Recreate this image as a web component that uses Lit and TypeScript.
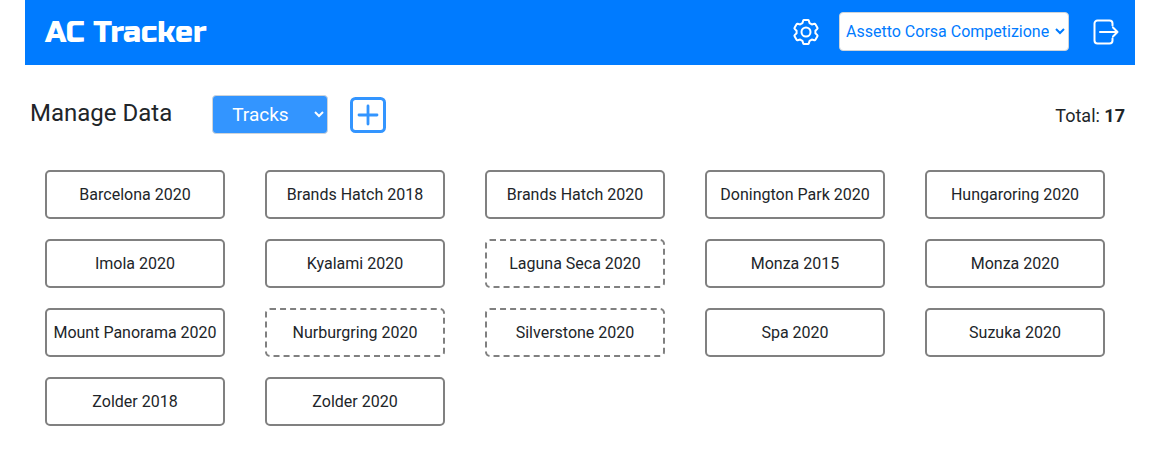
import { LitElement, html, css } from "lit";
import { customElement, property } from "lit/decorators.js";
import { classMap } from "lit/directives/class-map.js";

interface Track {
  name: string;
  year: number;
  pending?: boolean;
}

const TRACKS: Track[] = [
  { name: "Barcelona", year: 2020 },
  { name: "Brands Hatch", year: 2018 },
  { name: "Brands Hatch", year: 2020 },
  { name: "Donington Park", year: 2020 },
  { name: "Hungaroring", year: 2020 },
  { name: "Imola", year: 2020 },
  { name: "Kyalami", year: 2020 },
  { name: "Laguna Seca", year: 2020, pending: true },
  { name: "Monza", year: 2015 },
  { name: "Monza", year: 2020 },
  { name: "Mount Panorama", year: 2020 },
  { name: "Nurburgring", year: 2020, pending: true },
  { name: "Silverstone", year: 2020, pending: true },
  { name: "Spa", year: 2020 },
  { name: "Suzuka", year: 2020 },
  { name: "Zolder", year: 2018 },
  { name: "Zolder", year: 2020 },
];

@customElement("app-header")
export class AppHeader extends LitElement {
  static styles = css`
    :host {
      display: block;
      background: #007bff;
      color: #fff;
    }
    .bar {
      display: flex;
      align-items: center;
      justify-content: space-between;
      min-height: 65px;
      padding: 0 15px 2px 20px;
      box-sizing: border-box;
    }
    .brand {
      color: inherit;
      text-decoration: none;
      font-family: "Russo One", Roboto, sans-serif;
      font-size: 30px;
      line-height: 36px;
      font-weight: 400;
    }
    .actions {
      display: flex;
      align-items: center;
      gap: 19px;
    }
    .icon {
      display: block;
      padding: 0;
      border: 0;
      background: none;
      color: inherit;
      cursor: pointer;
    }
    .icon svg {
      display: block;
    }
    .logout {
      margin-left: 4px;
    }
    .game {
      width: 230px;
      height: 39px;
      padding: 0 2px;
      border: 1px solid #ced4da;
      border-radius: 4px;
      background-color: #fff;
      color: #007bff;
      font: 16px Roboto, sans-serif;
    }
  `;

  render() {
    return html`
      <header class="bar">
        <a class="brand" href="#">AC Tracker</a>
        <div class="actions">
          <button class="icon" aria-label="Settings">
            <svg width="28" height="28" viewBox="0 0 28 28" fill="none" stroke="currentColor" stroke-width="2" stroke-linejoin="round">
              <path d="M10.4 5.2L11.200 2.600Q11.400 2 12 2h4q.6 0 .8.6l.8 2.600 2.220 1.280 2.500-.7q.7-.2 1.100.4l2 3.500q.4.700-.1 1.200l-1.900 1.840v2.560l1.900 1.840q.5.500.1 1.200l-2 3.500q-.4.600-1.100.4l-2.500-.7-2.220 1.280-.8 2.600q-.2.600-.8.600h-4q-.6 0-.8-.6l-.8-2.600-2.220-1.280-2.500.7q-.7.200-1.100-.4l-2-3.500q-.4-.7.100-1.200l1.900-1.840v-2.560l-1.900-1.840q-.5-.5-.1-1.200l2-3.500q.4-.6 1.100-.4l2.500.7z" />
              <circle cx="14" cy="14" r="4.500" />
            </svg>
          </button>
          <select class="game" aria-label="Game">
            <option>Assetto Corsa Competizione</option>
          </select>
          <button class="icon logout" aria-label="Log out">
            <svg width="28" height="28" viewBox="0 0 28 28" fill="none" stroke="currentColor" stroke-width="2" stroke-linecap="round" stroke-linejoin="round">
              <path d="M20.500 7.500V5.500a3 3 0 0 0-3-3h-12a3 3 0 0 0-3 3v17a3 3 0 0 0 3 3h12a3 3 0 0 0 3-3v-2M8 14h17.500M21 9.500l4.500 4.500-4.500 4.500" />
            </svg>
          </button>
        </div>
      </header>
    `;
  }
}

@customElement("track-card")
export class TrackCard extends LitElement {
  @property({ attribute: false }) track!: Track;

  static styles = css`
    :host {
      display: block;
    }
    .card {
      display: block;
      width: 100%;
      padding: 11px 0 10px;
      border: 2px solid #808080;
      border-radius: 5px;
      background: #fff;
      color: #212529;
      font: 16px/24px Roboto, sans-serif;
      text-align: center;
      white-space: nowrap;
      cursor: pointer;
    }
    .pending {
      border-style: dashed;
    }
  `;

  render() {
    const { name, year, pending } = this.track;
    return html`<button class=${classMap({ card: true, pending: !!pending })}>${name} ${year}</button>`;
  }
}

@customElement("app-root")
export class AppRoot extends LitElement {
  @property({ attribute: false }) tracks = TRACKS;

  static styles = css`
    :host {
      display: block;
      padding: 0 26px 0 25px;
      background: #fff;
      color: #212529;
      font-family: Roboto, sans-serif;
    }
    .toolbar {
      display: flex;
      align-items: center;
      padding: 30px 10px 0 5px;
    }
    .title {
      margin: 0 40px 4px 0;
      font-size: 24px;
      line-height: 32px;
      font-weight: 400;
    }
    .kind {
      width: 116px;
      height: 39px;
      padding: 0 0 0 15px;
      border: 1px solid #ced4da;
      border-radius: 4px;
      background-color: #3395ff;
      color: #fff;
      font: 19px Roboto, sans-serif;
    }
    .add {
      margin-left: 22px;
      padding: 0;
      border: 0;
      background: none;
      color: #3395ff;
      cursor: pointer;
    }
    .add svg {
      display: block;
    }
    .total {
      margin-left: auto;
      padding-top: 2px;
      font-size: 18px;
      line-height: 24px;
    }
    .total b {
      font-weight: 700;
    }
    .grid {
      display: grid;
      grid-template-columns: repeat(auto-fill, 180px);
      gap: 20px 40px;
      margin: 0;
      padding: 36px 30px 40px 20px;
      list-style: none;
    }
  `;

  render() {
    return html`
      <app-header></app-header>
      <main>
        <div class="toolbar">
          <h1 class="title">Manage Data</h1>
          <select class="kind" aria-label="Data type">
            <option>Tracks</option>
          </select>
          <button class="add" aria-label="Add track">
            <svg width="36" height="36" viewBox="0 0 36 36" fill="none" stroke="currentColor" stroke-linecap="round">
              <rect x="1.500" y="1.500" width="33" height="33" rx="4" stroke-width="3" />
              <path d="M18 9v18M9 18h18" stroke-width="2.800" />
            </svg>
          </button>
          <div class="total">Total: <b>${this.tracks.length}</b></div>
        </div>
        <ul class="grid">
          ${this.tracks.map((track) => html`<li><track-card .track=${track}></track-card></li>`)}
        </ul>
      </main>
    `;
  }
}
